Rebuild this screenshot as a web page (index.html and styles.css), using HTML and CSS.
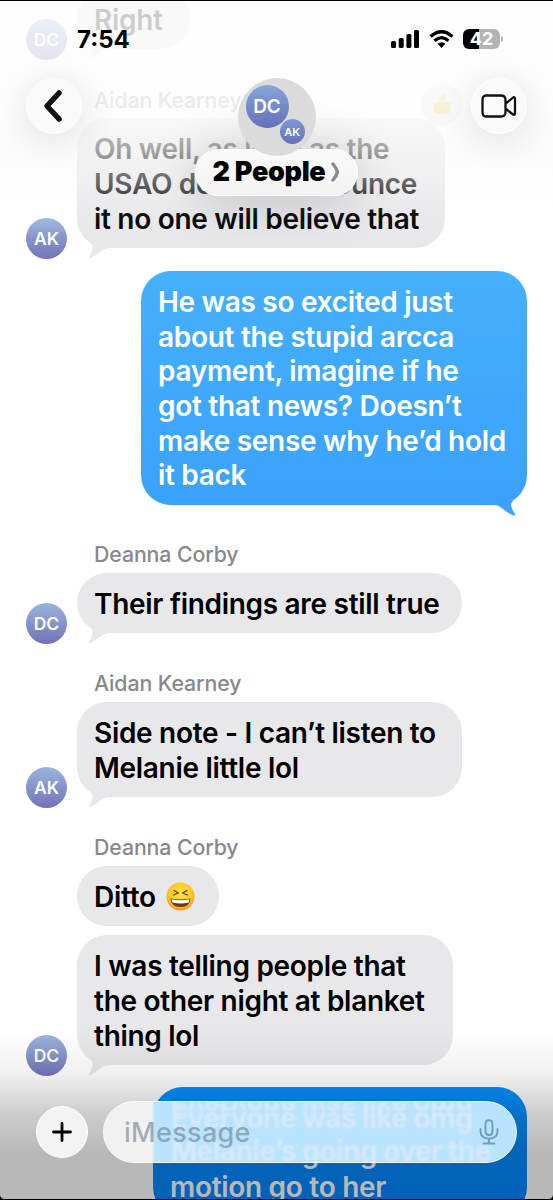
FILE: index.html
```html
<!DOCTYPE html>
<html lang="en">
<head>
    <meta charset="UTF-8">
    <meta name="viewport" content="width=device-width, initial-scale=1.0">
    <title>2 People</title>
    <link rel="stylesheet" href="styles.css">
</head>
<body>
    <!-- bubble tails -->
    <svg class="defs" width="0" height="0">
        <symbol id="tail" viewBox="0 0 34 24">
            <path d="M7 1C13 5 16 8 15.500 12C15 16 13 19 11.500 22.500C18 21.500 23 13 32 12V0H6Z" fill="currentColor"/>
        </symbol>
        <symbol id="tail-sent" viewBox="0 0 34 24">
            <path d="M7 1C13 5 17 10 15.500 14C14.500 17 13 20 11.500 21.500Q11.500 23 14 22.300C22 19 26 12.500 32 12V0H6Z" fill="currentColor"/>
        </symbol>
    </svg>
    <div class="phone">
        <main class="chat">
            <div class="row first">
                <div class="avatar">DC</div>
                <div class="bubble one">Right<svg class="tail"><use href="#tail"/></svg></div>
            </div>
            <p class="name n1">Aidan Kearney</p>
            <div class="row">
                <div class="avatar">AK</div>
                <div class="bubble w368">Oh well, as long as the<br>USAO doesn’t announce<br>it no one will believe that<svg class="tail"><use href="#tail"/></svg>
                    <span class="reaction">
                        <svg width="22" height="24" viewBox="0 0 22 24"><path d="M2 11h5L11 2q4-1 3 4l-1 4h5q4 1 1 4q2 2 0 4q1 4-4 4H7q-5-1-5-5z" fill="#f7b52c"/></svg>
                    </span>
                </div>
            </div>
            <div class="row sent">
                <div class="bubble w386">He was so excited just<br>about the stupid arcca<br>payment, imagine if he<br>got that news? Doesn’t<br>make sense why he’d hold<br>it back<svg class="tail"><use href="#tail-sent"/></svg></div>
            </div>
            <p class="name n2">Deanna Corby</p>
            <div class="row">
                <div class="avatar">DC</div>
                <div class="bubble one w385">Their findings are still true<svg class="tail"><use href="#tail"/></svg></div>
            </div>
            <p class="name n3">Aidan Kearney</p>
            <div class="row">
                <div class="avatar">AK</div>
                <div class="bubble w385">Side note - I can’t listen to<br>Melanie little lol<svg class="tail"><use href="#tail"/></svg></div>
            </div>
            <p class="name n4">Deanna Corby</p>
            <div class="row">
                <div class="bubble one alone">Ditto
                    <svg class="laugh" width="29" height="29" viewBox="0 0 29 29">
                        <defs>
                            <radialGradient id="face" cx=".5" cy=".4" r=".62">
                                <stop offset="0" stop-color="#ffe348"/>
                                <stop offset=".65" stop-color="#fdc925"/>
                                <stop offset="1" stop-color="#ed9418"/>
                            </radialGradient>
                        </defs>
                        <circle cx="14.500" cy="14.500" r="14" fill="url(#face)"/>
                        <path d="M8 8.500l4.500 2.500l-5 2M21 8.500L16.500 11l5 2" fill="none" stroke="#6b3a05" stroke-width="1.300" stroke-linecap="round" stroke-linejoin="round"/>
                        <path d="M4.500 16.500q10 2 20 0q-.5 8.500-10 8.500t-10-8.500z" fill="#6b3a05"/>
                        <path d="M5.500 17.300q9 1.700 18 0q-.3 3-1.500 3.500q-7.500 1.500-15 0q-1.200-.5-1.500-3.500z" fill="#fff"/>
                    </svg>
                </div>
            </div>
            <div class="row next">
                <div class="avatar">DC</div>
                <div class="bubble w376">I was telling people that<br>the other night at blanket<br>thing lol<svg class="tail"><use href="#tail"/></svg></div>
            </div>
            <div class="row sent last">
                <div class="bubble w374">Everyone was like omg<br>Melanie’s going over the<br>motion go to her</div>
            </div>
        </main>

        <div class="fade-top"></div>
        <div class="fade-bottom"></div>

        <header class="top">
            <div class="status">
                <span class="time">7:54</span>
                <div class="status-icons">
                    <svg width="29" height="18" viewBox="0 0 29 18">
                        <rect x="0" y="11" width="5" height="7" rx="1.500"/>
                        <rect x="7.700" y="8" width="5" height="10" rx="1.500"/>
                        <rect x="15.400" y="4" width="5" height="14" rx="1.500"/>
                        <rect x="23" y="0" width="5" height="18" rx="1.500"/>
                    </svg>
                    <svg class="wifi" width="25" height="18" viewBox="0 0 25 18">
                        <path d="M1.500 6.500Q12.500-3 23.500 6.500M5.500 10.700Q12.500 4.500 19.500 10.700" fill="none" stroke="#000" stroke-width="3.200"/>
                        <path d="M8.500 13.800Q12.500 10.500 16.500 13.800L12.500 18Z"/>
                    </svg>
                    <div class="battery">42</div>
                </div>
            </div>
            <div class="bar">
                <button class="round">
                    <svg width="22" height="34" viewBox="0 0 22 34"><path d="M16 4L4 17L16 30" fill="none" stroke="#111" stroke-width="5.500" stroke-linecap="round" stroke-linejoin="round"/></svg>
                </button>
                <div class="group">
                    <div class="group-pic">
                        <div class="avatar big">DC</div>
                        <div class="avatar small">AK</div>
                    </div>
                    <div class="pill">
                        <span class="pill-text">2 People</span>
                        <svg width="9" height="20" viewBox="0 0 9 20"><path d="M2 2Q5.500 6 6.500 10Q5.500 14 2 18" fill="none" stroke="#8b8b8b" stroke-width="3.400" stroke-linecap="round"/></svg>
                    </div>
                </div>
                <button class="round">
                    <svg width="36" height="24" viewBox="0 0 36 24"><path d="M5 1.500H20Q24.500 1.500 24.500 6V18Q24.500 22.500 20 22.500H5Q1.500 22.500 1.500 18V6Q1.500 1.500 5 1.500ZM24.500 10L32 3.500Q34 2.500 34 5V19Q34 21.500 32 20.500L24.500 14.500" fill="none" stroke="#111" stroke-width="2.300" stroke-linejoin="round"/></svg>
                </button>
            </div>
        </header>

        <footer class="compose">
            <button class="plus">
                <svg width="20" height="20" viewBox="0 0 20 20"><path d="M10 1.500V18.500M1.500 10H18.500" stroke="#000" stroke-width="2.800" stroke-linecap="round"/></svg>
            </button>
            <div class="field">
                <span class="ghost g1">Everyone was like omg</span>
                <span class="ghost g2">Everyone was like omg</span>
                <span class="ghost g3">Melanie’s going over the</span>
                <span class="placeholder">iMessage</span>
                <svg class="mic" width="20" height="26" viewBox="0 0 20 26"><path d="M10 1.200Q13.500 1.200 13.500 5V12Q13.500 16 10 16T6.500 12V5Q6.500 1.200 10 1.200ZM1.500 10V12Q1.500 19.500 10 19.500T18.500 12V10M10 19.500V24.500M4.500 24.500H15.500" fill="none" stroke="#6d9dbd" stroke-width="1.900" stroke-linecap="round"/></svg>
            </div>
        </footer>
    </div>
</body>
</html>
```
FILE: styles.css
```css
* {
    margin: 0;
    padding: 0;
    box-sizing: border-box;
}
body {
    background: #000;
    font-family: Inter, "Liberation Sans", sans-serif;
}
button {
    border: none;
    font: inherit;
}
.defs {
    position: absolute;
}
.phone {
    position: relative;
    width: 553px;
    height: 1200px;
    overflow: hidden;
    background: #fff;
    border-top: 1px solid #000;
    border-bottom: 1px solid #000;
    border-radius: 0 0 5px 5px;
}

/* messages */
.chat {
    display: flex;
    flex-direction: column;
    padding: 0 26px;
    margin-top: -12px;
}
.row {
    display: flex;
    align-items: flex-end;
    padding-left: 51px;
}
.row .avatar {
    margin-left: -51px;
    margin-right: 10px;
    margin-bottom: -11px;
}
.avatar {
    display: flex;
    align-items: center;
    justify-content: center;
    flex-shrink: 0;
    width: 41px;
    height: 41px;
    border-radius: 50%;
    background: linear-gradient(#9bb5dc, #7173b8);
    color: #fff;
    font-size: 17.5px;
    font-weight: 600;
}
.bubble {
    position: relative;
    padding: 14px 0 11.5px 17px;
    border-radius: 30px;
    background: #e8e8eb;
    color: #000;
    font-size: 28px;
    font-weight: 600;
    line-height: 34.7px;
    letter-spacing: -0.3px;
    white-space: nowrap;
}
.first .bubble {
    width: 113px;
}
.alone {
    display: flex;
    align-items: center;
    gap: 10px;
    width: 142px;
}
.tail {
    position: absolute;
    left: 0;
    bottom: -12px;
    width: 34px;
    height: 24px;
    color: #e8e8eb;
}
.sent {
    justify-content: flex-end;
    margin-top: 23px;
}
.sent .bubble {
    background: linear-gradient(#45b0fb, #3aa2fc);
    color: #fff;
}
.sent .tail {
    left: auto;
    right: 0;
    color: #3aa2fc;
    transform: scaleX(-1);
}
.w368 { width: 368px; }
.w374 { width: 374px; }
.w376 { width: 376px; }
.w385 { width: 385px; }
.w386 { width: 386px; }
.next {
    margin-top: 9.500px;
}
.sent.last {
    margin-top: 22px;
}
.last .bubble {
    background: linear-gradient(#0590ff, #0086ff);
}
.name {
    height: 26px;
    padding-left: 68px;
    font-size: 21.3px;
    font-weight: 500;
    letter-spacing: -0.1px;
    line-height: 26px;
    color: #88888c;
}
.n1 { margin-top: 38px; margin-bottom: 5px; }
.n2 { margin-top: 36px; margin-bottom: 6px; }
.n3 { margin-top: 37.500px; margin-bottom: 6px; }
.n4 { margin-top: 36.500px; margin-bottom: 6px; }
.reaction {
    position: absolute;
    display: flex;
    align-items: center;
    justify-content: center;
    top: -35px;
    right: -18px;
    width: 42px;
    height: 42px;
    border-radius: 50%;
    background: #e8e8eb;
}
.fade-top {
    position: absolute;
    inset: 0 0 auto;
    height: 240px;
    background: linear-gradient(rgba(253,253,253,.8), rgba(253,253,253,.84) 105px, rgba(250,250,250,.66) 148px, rgba(250,250,250,.38) 184px, rgba(250,250,250,.08) 212px, rgba(255,255,255,0));
}
.fade-bottom {
    position: absolute;
    inset: auto 0 0;
    height: 170px;
    background: linear-gradient(rgba(0,0,0,0), rgba(0,0,0,.06) 45px, rgba(0,0,0,.2) 85px, rgba(0,0,0,.28) 125px, rgba(0,0,0,.28));
}

/* header */
.top {
    position: absolute;
    z-index: 1;
    inset: 0 0 auto;
}
.status {
    display: flex;
    justify-content: space-between;
    align-items: center;
    height: 38px;
    margin-top: 19px;
    padding: 0 49px 0 77px;
}
.time {
    font-size: 24px;
    font-weight: 700;
}
.status-icons {
    display: flex;
    align-items: center;
}
.wifi {
    margin: 0 9px 0 9px;
}
.battery {
    position: relative;
    width: 37px;
    height: 20px;
    border-radius: 6px;
    background: linear-gradient(to right, #000 16px, #b4b4b4 16px);
    color: #fff;
    font-size: 18px;
    font-weight: 700;
    line-height: 20px;
    text-align: center;
    margin-right: 4px;
}
.battery::after {
    content: "";
    position: absolute;
    left: 38px;
    top: 7px;
    width: 2px;
    height: 6px;
    border-radius: 0 2px 2px 0;
    background: #b4b4b4;
}
.bar {
    display: flex;
    justify-content: space-between;
    align-items: flex-start;
    margin-top: 20px;
    padding: 0 26px;
}
.round {
    display: flex;
    align-items: center;
    justify-content: center;
    width: 56px;
    height: 56px;
    border-radius: 50%;
    background: #fafafa;
    border: 1px solid #fff;
    box-shadow: 0 6px 36px rgba(0,0,0,.12);
}
.group {
    display: flex;
    flex-direction: column;
    align-items: center;
}
.group-pic {
    position: relative;
    z-index: 1;
    width: 78px;
    height: 78px;
    border-radius: 50%;
    background: #dbdbdb;
}
.big {
    position: absolute;
    left: 8px;
    top: 7px;
    width: 43px;
    height: 43px;
    font-size: 19px;
    background: linear-gradient(#88a5d9, #6370b9);
}
.small {
    position: absolute;
    left: 42px;
    top: 41px;
    width: 25px;
    height: 25px;
    font-size: 11px;
    background: linear-gradient(#829bd1, #6270b8);
}
.pill {
    display: flex;
    align-items: center;
    justify-content: center;
    gap: 6px;
    width: 163px;
    height: 47px;
    margin-top: -7px;
    padding-bottom: 2px;
    border-radius: 24px;
    background: linear-gradient(#fafafa, #f3f3f3);
    border: 1px solid #fff;
    box-shadow: 0 4px 50px rgba(0,0,0,.2);
}
.pill-text {
    font-size: 27px;
    font-weight: 900;
    letter-spacing: -0.3px;
}

/* message input */
.compose {
    position: absolute;
    inset: auto 0 36px;
    display: flex;
    align-items: center;
    gap: 15px;
    padding: 0 36px;
}
.plus {
    display: flex;
    align-items: center;
    justify-content: center;
    width: 52px;
    height: 52px;
    border-radius: 50%;
    background: #f3f3f3;
    border: 1px solid #fff;
}
.field {
    position: relative;
    display: flex;
    align-items: center;
    justify-content: space-between;
    flex: 1;
    height: 62px;
    padding: 0 17px 0 20px;
    border-radius: 31px;
    border: 1px solid #f4fbff;
    background: linear-gradient(to right, #f1f1f1 48px, #b9e4ff 51px);
    overflow: hidden;
}
.placeholder {
    position: relative;
    font-size: 27px;
    font-weight: 500;
    letter-spacing: 0.3px;
    color: rgba(110,125,140,.6);
}
.ghost {
    position: absolute;
    left: 67px;
    font-size: 28px;
    font-weight: 650;
    line-height: 34px;
    letter-spacing: -0.55px;
    color: #d6e9fa;
    white-space: nowrap;
    filter: blur(.8px);
}
.g1 {
    top: -14px;
    transform: scaleY(-1);
    clip-path: inset(0 0 14px 0);
}
.g2 { top: -1px; }
.g3 { top: 32px; }
.mic {
    position: relative;
}
```
